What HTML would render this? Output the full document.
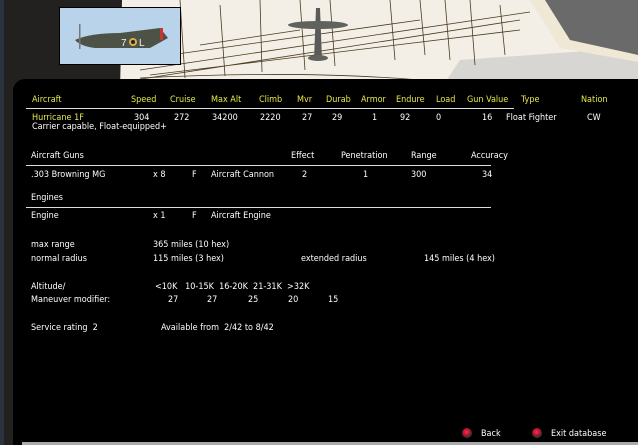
<!DOCTYPE html>
<html><head><style>
html,body{margin:0;width:638px;height:445px;overflow:hidden}
body{background:#222120;font-family:"DejaVu Sans Condensed","Liberation Sans",sans-serif;font-size:9px;color:#fff;position:relative}
.a{position:absolute;white-space:nowrap;line-height:11px}
.y{color:#e8e84a}
.hl{position:absolute;height:1px;background:#ddd}
</style></head><body>
<div style="position:absolute;left:0;top:0;width:4px;height:445px;background:#2c3340"></div>
<svg style="position:absolute;left:0;top:0" width="638" height="90">
<polygon points="122,0 560,0 600,40 610,90 120,90" fill="#f3efe6"/>
<polygon points="460,60 600,50 638,60 638,90 440,90" fill="#d8d6d2"/>
<polygon points="530,0 638,0 638,62 560,48" fill="#efe8d4"/>
<polygon points="545,0 638,0 638,55 570,40" fill="#6a6a6a"/>
<g stroke="#4a3a20" stroke-width="0.8" fill="none">
<path d="M135,80 L520,20 M140,70 L530,12 M170,55 L420,20 M200,45 L300,30 M150,75 L520,30"/>
<path d="M180,0 L185,78 M220,5 L225,76 M260,0 L262,72 M300,0 L305,70 M330,0 L335,66 M390,0 L395,60 M420,0 L425,55 M445,0 L450,60 M470,0 L475,65 M500,5 L505,55"/>
<path d="M140,78 Q300,70 420,80"/>
</g>
<rect x="59" y="7" width="122" height="58" fill="#000"/>
<rect x="60" y="8" width="120" height="56" fill="#b9d3ea"/>
<path d="M75,40 Q90,33 120,33 L160,28 L168,38 L150,48 L95,48 Q80,46 75,40Z" fill="#4d5247"/>
<rect x="79" y="24" width="1.5" height="25" fill="#777"/>
<circle cx="133" cy="42" r="4" fill="#d8b040"/><circle cx="133" cy="42" r="2" fill="#223"/>
<path d="M160,28 L163,28 L163,40 L160,40Z" fill="#c33"/>
<text x="121" y="46" font-size="10" fill="#eee" font-family="Liberation Sans">7</text>
<text x="139" y="46" font-size="10" fill="#eee" font-family="Liberation Sans">L</text>
<path d="M316,8 L320,8 L322,60 L314,60Z" fill="#5a5a58"/>
<ellipse cx="318" cy="25" rx="30" ry="4" fill="#60625e"/>
<ellipse cx="318" cy="58" rx="10" ry="3" fill="#60625e"/>
</svg>
<div style="position:absolute;left:13px;top:79px;width:625px;height:366px;background:#000;border-radius:12px 0 0 0"></div>

<div class="a y" style="left:32px;top:95px">Aircraft</div>
<div class="a y" style="left:131px;top:95px">Speed</div>
<div class="a y" style="left:170px;top:95px">Cruise</div>
<div class="a y" style="left:211px;top:95px">Max Alt</div>
<div class="a y" style="left:259px;top:95px">Climb</div>
<div class="a y" style="left:297px;top:95px">Mvr</div>
<div class="a y" style="left:326px;top:95px">Durab</div>
<div class="a y" style="left:361px;top:95px">Armor</div>
<div class="a y" style="left:396px;top:95px">Endure</div>
<div class="a y" style="left:436px;top:95px">Load</div>
<div class="a y" style="left:467px;top:95px">Gun Value</div>
<div class="a y" style="left:521px;top:95px">Type</div>
<div class="a y" style="left:581px;top:95px">Nation</div>
<div class="hl" style="left:26px;top:108px;width:488px"></div>
<div class="a y" style="left:32px;top:113px">Hurricane 1F</div>
<div class="a" style="left:134px;top:113px">304</div>
<div class="a" style="left:174px;top:113px">272</div>
<div class="a" style="left:212px;top:113px">34200</div>
<div class="a" style="left:260px;top:113px">2220</div>
<div class="a" style="left:302px;top:113px">27</div>
<div class="a" style="left:332px;top:113px">29</div>
<div class="a" style="left:372px;top:113px">1</div>
<div class="a" style="left:400px;top:113px">92</div>
<div class="a" style="left:436px;top:113px">0</div>
<div class="a" style="left:482px;top:113px">16</div>
<div class="a" style="left:506px;top:113px">Float Fighter</div>
<div class="a" style="left:587px;top:113px">CW</div>
<div class="a" style="left:32px;top:122px">Carrier capable, Float-equipped+</div>

<div class="a" style="left:31px;top:151px">Aircraft Guns</div>
<div class="a" style="left:291px;top:151px">Effect</div>
<div class="a" style="left:341px;top:151px">Penetration</div>
<div class="a" style="left:411px;top:151px">Range</div>
<div class="a" style="left:471px;top:151px">Accuracy</div>
<div class="hl" style="left:26px;top:165px;width:465px"></div>
<div class="a" style="left:31px;top:170px">.303 Browning MG</div>
<div class="a" style="left:153px;top:170px">x 8</div>
<div class="a" style="left:192px;top:170px">F</div>
<div class="a" style="left:211px;top:170px">Aircraft Cannon</div>
<div class="a" style="left:302px;top:170px">2</div>
<div class="a" style="left:363px;top:170px">1</div>
<div class="a" style="left:411px;top:170px">300</div>
<div class="a" style="left:482px;top:170px">34</div>
<div class="a" style="left:31px;top:193px">Engines</div>
<div class="hl" style="left:26px;top:207px;width:465px"></div>
<div class="a" style="left:31px;top:211px">Engine</div>
<div class="a" style="left:153px;top:211px">x 1</div>
<div class="a" style="left:192px;top:211px">F</div>
<div class="a" style="left:211px;top:211px">Aircraft Engine</div>

<div class="a" style="left:31px;top:240px">max range</div>
<div class="a" style="left:153px;top:240px">365 miles (10 hex)</div>
<div class="a" style="left:31px;top:254px">normal radius</div>
<div class="a" style="left:153px;top:254px">115 miles (3 hex)</div>
<div class="a" style="left:301px;top:254px">extended radius</div>
<div class="a" style="left:424px;top:254px">145 miles (4 hex)</div>

<div class="a" style="left:31px;top:282px">Altitude/</div>
<div class="a" style="left:155px;top:282px">&lt;10K &nbsp;&nbsp;10-15K &nbsp;16-20K &nbsp;21-31K &nbsp;&gt;32K</div>
<div class="a" style="left:31px;top:295px">Maneuver modifier:</div>
<div class="a" style="left:168px;top:295px">27</div>
<div class="a" style="left:207px;top:295px">27</div>
<div class="a" style="left:248px;top:295px">25</div>
<div class="a" style="left:288px;top:295px">20</div>
<div class="a" style="left:328px;top:295px">15</div>

<div class="a" style="left:31px;top:323px">Service rating &nbsp;2</div>
<div class="a" style="left:161px;top:323px">Available from &nbsp;2/42 to 8/42</div>

<div style="position:absolute;left:462px;top:428px;width:10px;height:10px;border-radius:50%;background:radial-gradient(circle at 45% 40%,#ff3050 0,#b0102a 45%,#333 60%,#555 100%)"></div>
<div class="a" style="left:481px;top:429px">Back</div>
<div style="position:absolute;left:532px;top:428px;width:10px;height:10px;border-radius:50%;background:radial-gradient(circle at 45% 40%,#ff3050 0,#b0102a 45%,#333 60%,#555 100%)"></div>
<div class="a" style="left:551px;top:429px">Exit database</div>
<div style="position:absolute;left:22px;top:442px;width:616px;height:3px;background:#aaa"></div>
</body></html>
